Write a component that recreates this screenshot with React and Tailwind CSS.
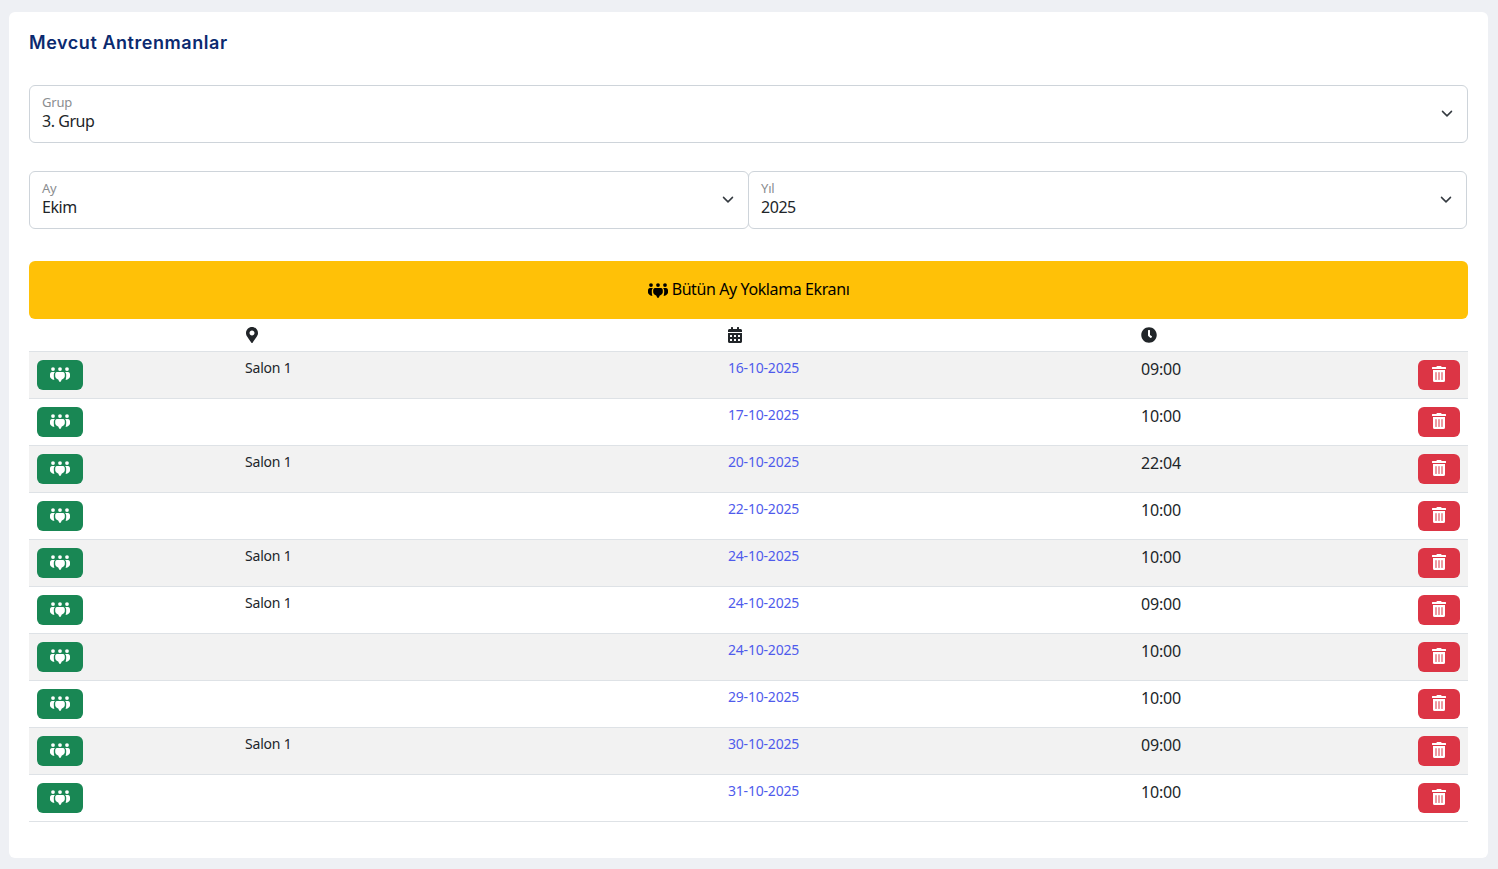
import React from "react";
import { FaMapMarkerAlt, FaCalendarAlt, FaClock, FaTrashAlt } from "react-icons/fa";

const rows = [
  ["Salon 1", "16-10-2025", "09:00"],
  ["", "17-10-2025", "10:00"],
  ["Salon 1", "20-10-2025", "22:04"],
  ["", "22-10-2025", "10:00"],
  ["Salon 1", "24-10-2025", "10:00"],
  ["Salon 1", "24-10-2025", "09:00"],
  ["", "24-10-2025", "10:00"],
  ["", "29-10-2025", "10:00"],
  ["Salon 1", "30-10-2025", "09:00"],
  ["", "31-10-2025", "10:00"],
];

function Chevron() {
  return (
    <svg width="16" height="16" viewBox="0 0 16 16" fill="none" className="shrink-0">
      <path d="M2 5l6 6 6-6" stroke="#343a40" strokeWidth="2" strokeLinecap="round" strokeLinejoin="round" transform="translate(2 1.6) scale(0.75)" />
    </svg>
  );
}

function People() {
  return (
    <svg width="20" height="15" viewBox="0 0 20 15" fill="currentColor" className="shrink-0">
      <circle cx="3" cy="2.1" r="1.9" />
      <circle cx="10" cy="2.1" r="1.9" />
      <circle cx="17" cy="2.1" r="1.9" />
      <path d="M4.9 5H2C.8 5 0 6.2 0 7.5V9.5C0 11 1.6 12.4 4.4 13 4.1 12 3.8 10.5 3.8 9V7.6C3.8 6.6 4.2 5.7 4.9 5Z" />
      <path d="M15.1 5H18C19.2 5 20 6.2 20 7.5V9.5C20 11 18.4 12.4 15.6 13 15.9 12 16.2 10.5 16.2 9V7.6C16.2 6.6 15.8 5.7 15.1 5Z" />
      <path d="M7 5H13C14.2 5 14.8 6.2 14.8 7.6V9.2C14.8 10.8 13.2 12 11.8 12.4L10.8 14.6C10.5 15.1 9.5 15.1 9.2 14.6L8.2 12.4C6.8 12 5.2 10.8 5.2 9.2V7.6C5.2 6.2 5.8 5 7 5Z" />
    </svg>
  );
}

function Select({ label, value, className }) {
  return (
    <div className={`h-[58px] flex items-center justify-between border border-[#ced4da] rounded-[6px] bg-white pl-3 pr-[12px] ${className}`}>
      <div className="flex flex-col pb-[4px]">
        <span className="text-[13px] leading-[16px] text-[#8a8d90] mt-[1px]">{label}</span>
        <span className="text-[16px] leading-[22px] text-[#212529] tracking-[-0.45px]">{value}</span>
      </div>
      <Chevron />
    </div>
  );
}

export default function App() {
  return (
    <div className="min-h-[869px] bg-[#eef0f4] pt-[12px] pl-[9px] pr-[10px] pb-[11px] font-['Noto_Sans',sans-serif] tracking-[-0.2px]">
      <div className="h-[846px] bg-white rounded-[6px] px-[20px] pt-[20px]">
        <h2 className="text-[18px] leading-[22px] font-semibold text-[#0b2a6f] font-['Inter',sans-serif] tracking-[0.55px]">Mevcut Antrenmanlar</h2>
        <Select label="Grup" value="3. Grup" className="mt-[31px]" />
        <div className="flex mt-[28px] pr-[1px]">
          <Select label="Ay" value="Ekim" className="w-[720px]" />
          <Select label="Yıl" value="2025" className="w-[719px] -ml-[1px]" />
        </div>
        <div className="mt-[32px] h-[58px] bg-[#ffc107] rounded-[6px] flex items-center justify-center gap-[4px] text-[16px] text-black tracking-[-0.4px]">
          <People />
          <span className="pb-[2px]">Bütün Ay Yoklama Ekranı</span>
        </div>
        <table className="w-[1439px] table-fixed border-collapse text-[#212529]">
          <colgroup>
            <col className="w-[208px]" />
            <col className="w-[483px]" />
            <col className="w-[413px]" />
            <col className="w-[223px]" />
            <col className="w-[112px]" />
          </colgroup>
          <thead>
            <tr className="h-[32px] border-b border-[#dee2e6]">
              <th />
              <th className="pl-[7px] text-left align-middle"><FaMapMarkerAlt className="text-[16px] text-[#212529]" /></th>
              <th className="pl-[7px] text-left align-middle"><FaCalendarAlt className="text-[16px] text-[#212529]" /></th>
              <th className="px-2 text-left align-middle"><FaClock className="text-[16px] text-[#212529]" /></th>
              <th />
            </tr>
          </thead>
          <tbody>
            {rows.map((r, i) => (
              <tr key={i} className={`h-[47px] border-b border-[#dee2e6] ${i % 2 === 0 ? "bg-[#f2f2f2]" : "bg-white"}`}>
                <td className="pl-2 align-top pt-2">
                  <div className="w-[46px] h-[30px] bg-[#198754] rounded-[6px] flex items-center justify-center text-white">
                    <People />
                  </div>
                </td>
                <td className="px-2 align-top pt-[6px] text-[14px] leading-[20px]">{r[0]}</td>
                <td className="px-2 align-top pt-[6px] text-[14px] leading-[20px] text-[#4f5bec]">{r[1]}</td>
                <td className="pl-[8px] pr-2 align-top pt-[5px] text-[16px] leading-[24px]">{r[2]}</td>
                <td className="pr-2 align-top pt-2">
                  <div className="ml-auto w-[42px] h-[30px] bg-[#dc3545] rounded-[6px] flex items-center justify-center text-white pb-[1px]">
                    <FaTrashAlt className="text-[16px]" />
                  </div>
                </td>
              </tr>
            ))}
          </tbody>
        </table>
      </div>
    </div>
  );
}
